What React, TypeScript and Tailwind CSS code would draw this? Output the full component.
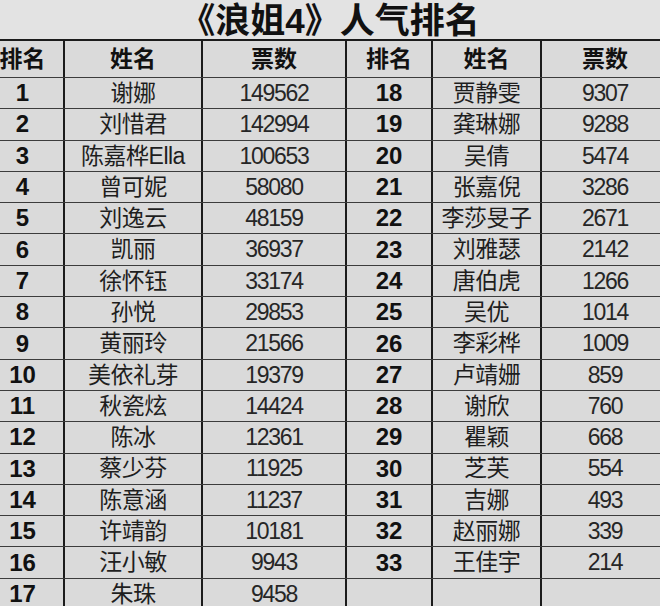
import React from "react";

const left: [string, string, string][] = [
  ["1", "谢娜", "149562"],
  ["2", "刘惜君", "142994"],
  ["3", "陈嘉桦Ella", "100653"],
  ["4", "曾可妮", "58080"],
  ["5", "刘逸云", "48159"],
  ["6", "凯丽", "36937"],
  ["7", "徐怀钰", "33174"],
  ["8", "孙悦", "29853"],
  ["9", "黄丽玲", "21566"],
  ["10", "美依礼芽", "19379"],
  ["11", "秋瓷炫", "14424"],
  ["12", "陈冰", "12361"],
  ["13", "蔡少芬", "11925"],
  ["14", "陈意涵", "11237"],
  ["15", "许靖韵", "10181"],
  ["16", "汪小敏", "9943"],
  ["17", "朱珠", "9458"],
];

const right: [string, string, string][] = [
  ["18", "贾静雯", "9307"],
  ["19", "龚琳娜", "9288"],
  ["20", "吴倩", "5474"],
  ["21", "张嘉倪", "3286"],
  ["22", "李莎旻子", "2671"],
  ["23", "刘雅瑟", "2142"],
  ["24", "唐伯虎", "1266"],
  ["25", "吴优", "1014"],
  ["26", "李彩桦", "1009"],
  ["27", "卢靖姗", "859"],
  ["28", "谢欣", "760"],
  ["29", "瞿颖", "668"],
  ["30", "芝芙", "554"],
  ["31", "吉娜", "493"],
  ["32", "赵丽娜", "339"],
  ["33", "王佳宇", "214"],
  ["", "", ""],
];

const cell = "flex items-center justify-center border-r-2 border-[#1c1c1c] whitespace-nowrap";
const rankCls = "text-[24px] font-bold text-[#111]";
const nameCls = "text-[23px] text-[#1e1e1e] tracking-[-0.5px]";
const voteCls = "text-[23px] text-[#262626] tracking-[-1.3px]";

function Row({ l, r, header }: { l: string[]; r: string[]; header?: boolean }) {
  const h = header ? "h-[37px]" : "h-[31.3px]";
  const hd = "text-[23px] font-bold text-[#111]";
  return (
    <div className={`flex ${h} border-b-[1.5px] border-[#3c3c3c]`}>
      <div className={`${cell} w-[83px] ${header ? hd : rankCls}`}>{l[0]}</div>
      <div className={`${cell} w-[138px] ${header ? hd : nameCls}`}>{l[1]}</div>
      <div className={`${cell} w-[144px] ${header ? hd : voteCls}`}>{l[2]}</div>
      <div className={`${cell} w-[86px] ${header ? hd : rankCls}`}>{r[0]}</div>
      <div className={`${cell} w-[109px] ${header ? hd : nameCls}`}>{r[1]}</div>
      <div className={`${cell} w-[128px] ${header ? hd : voteCls}`}>{r[2]}</div>
    </div>
  );
}

export default function App() {
  return (
    <div
      className="w-[660px] h-[606px] overflow-hidden bg-[#e3e3e3]"
      style={{ fontFamily: '"Liberation Sans", "Noto Sans CJK SC", sans-serif' }}
    >
      <div className="h-[39px] flex items-center justify-center text-[35px] font-bold text-[#111] leading-none pt-[2px]">
        《浪姐4》人气排名
      </div>
      <div className="-ml-[18px] w-[700px] border-t-2 border-[#1c1c1c] bg-[#dadada]">
        <Row header l={["排名", "姓名", "票数"]} r={["排名", "姓名", "票数"]} />
        {left.map((row, i) => (
          <Row key={i} l={row} r={right[i]} />
        ))}
      </div>
    </div>
  );
}
